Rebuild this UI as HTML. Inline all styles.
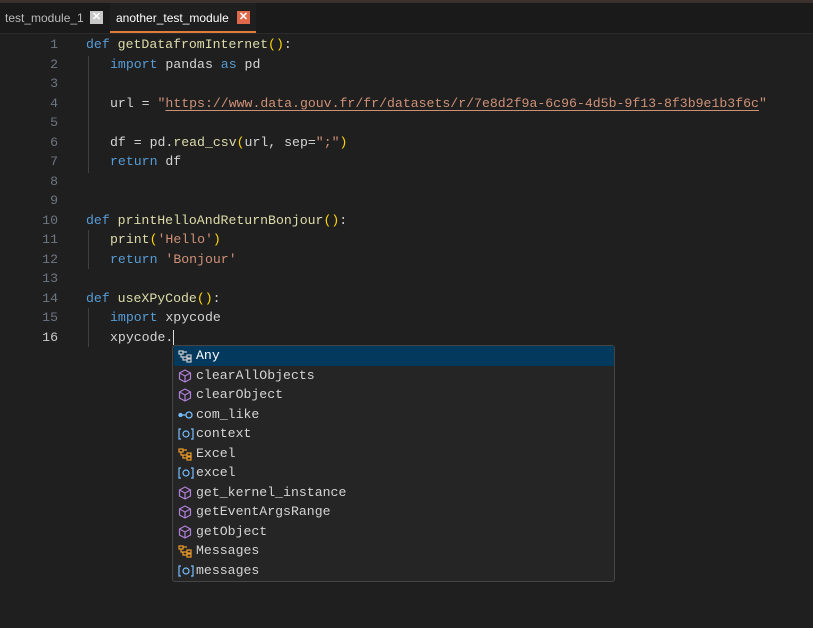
<!DOCTYPE html>
<html><head><style>
body{margin:0;width:813px;height:628px;background:#1f1f1f;overflow:hidden;position:relative;font-family:"Liberation Mono",monospace;font-size:13.2px;color:#d4d4d4}
.top{position:absolute;left:0;top:0;width:813px;height:3px;background:#3b302b}
.tabs{position:absolute;left:0;top:3px;width:813px;height:30px;background:#1a1a1a;border-bottom:1px solid #2b2b2b}
.tab{position:absolute;top:0;height:30px;font-family:"Liberation Sans",sans-serif;font-size:12px;line-height:31px}
.x{position:absolute;top:8px;width:13px;height:13px;font-size:11px;line-height:13px;text-align:center;color:#fff;font-weight:bold;font-family:"Liberation Sans",sans-serif}
.ln{position:absolute;width:58px;text-align:right;color:#6e7681}
.c{position:absolute;white-space:pre}
.k{color:#569cd6}.f{color:#dcdcaa}.s{color:#ce9178}.y{color:#ffd700}
.guide{position:absolute;left:88px;width:1px;background:#404040}
.sug{position:absolute;left:172px;top:345px;width:441px;height:235px;background:#252526;border:1px solid #454545;border-radius:3px}
.row{position:absolute;left:1px;width:440px;height:19.5px;line-height:19.5px}
.row span{position:absolute;left:22px}
.row svg{position:absolute;left:4px;top:3px}
.code{position:absolute;left:0;top:2px;width:813px;height:400px}
</style></head><body>
<div class="top"></div>
<div class="tabs">
 <div class="tab" style="left:0;width:108px;color:#bbb;"><span style="position:absolute;left:5px">test_module_1</span><div class="x" style="left:90px;background:#c8c8c8;color:#fff">✕</div></div>
 <div class="tab" style="left:110px;width:146px;background:#1f1f1f;color:#fff;border-bottom:2px solid #e07b3a;height:28px"><span style="position:absolute;left:6px;line-height:30px">another_test_module</span><div class="x" style="left:127px;top:8px;background:#e0684b">✕</div></div>
</div>
<div class="code">
<div class="guide" style="top:54px;height:117px"></div>
<div class="guide" style="top:228px;height:39px"></div>
<div class="guide" style="top:306px;height:39px"></div>

<div class="ln" style="top:35px">1</div><div class="c" style="left:86px;top:35px"><span class="k">def</span> <span class="f">getDatafromInternet</span><span class="y">()</span>:</div>
<div class="ln" style="top:54.5px">2</div><div class="c" style="left:110px;top:54.5px"><span class="k">import</span> pandas <span class="k">as</span> pd</div>
<div class="ln" style="top:74px">3</div>
<div class="ln" style="top:93.5px">4</div><div class="c" style="left:110px;top:93.5px">url = <span class="s">"<span style="text-decoration:underline;text-underline-offset:3px">https://www.data.gouv.fr/fr/datasets/r/7e8d2f9a-6c96-4d5b-9f13-8f3b9e1b3f6c</span>"</span></div>
<div class="ln" style="top:113px">5</div>
<div class="ln" style="top:132.5px">6</div><div class="c" style="left:110px;top:132.5px">df = pd.<span class="f">read_csv</span><span class="y">(</span>url, sep=<span class="s">";"</span><span class="y">)</span></div>
<div class="ln" style="top:152px">7</div><div class="c" style="left:110px;top:152px"><span class="k">return</span> df</div>
<div class="ln" style="top:171.5px">8</div>
<div class="ln" style="top:191px">9</div>
<div class="ln" style="top:210.5px">10</div><div class="c" style="left:86px;top:210.5px"><span class="k">def</span> <span class="f">printHelloAndReturnBonjour</span><span class="y">()</span>:</div>
<div class="ln" style="top:230px">11</div><div class="c" style="left:110px;top:230px"><span class="f">print</span><span class="y">(</span><span class="s">'Hello'</span><span class="y">)</span></div>
<div class="ln" style="top:249.5px">12</div><div class="c" style="left:110px;top:249.5px"><span class="k">return</span> <span class="s">'Bonjour'</span></div>
<div class="ln" style="top:269px">13</div>
<div class="ln" style="top:288.5px">14</div><div class="c" style="left:86px;top:288.5px"><span class="k">def</span> <span class="f">useXPyCode</span><span class="y">()</span>:</div>
<div class="ln" style="top:308px">15</div><div class="c" style="left:110px;top:308px"><span class="k">import</span> xpycode</div>
<div class="ln" style="top:327.5px;color:#ccc">16</div><div class="c" style="left:110px;top:327.5px">xpycode.<span style="border-left:1px solid #ddd"></span></div>
</div>

<div class="sug">
 <div class="row" style="top:0;background:#04395e;color:#fff"><svg width="14" height="14" viewBox="0 0 14 14" fill="none" stroke="#ccc" stroke-width="1.2"><rect x="1" y="2" width="4" height="3"/><rect x="9" y="6" width="4" height="3"/><rect x="9" y="10" width="4" height="3"/><path d="M3 5v3h6M5 8v3h4M5 3h4"/></svg><span>Any</span></div>
 <div class="row" style="top:19.5px"><svg width="14" height="14" viewBox="0 0 14 14" fill="none" stroke="#b180d7" stroke-width="1.2"><path d="M7 1l5.5 3v6L7 13 1.5 10V4z M1.5 4L7 7l5.5-3M7 7v6"/></svg><span>clearAllObjects</span></div>
 <div class="row" style="top:39px"><svg width="14" height="14" viewBox="0 0 14 14" fill="none" stroke="#b180d7" stroke-width="1.2"><path d="M7 1l5.5 3v6L7 13 1.5 10V4z M1.5 4L7 7l5.5-3M7 7v6"/></svg><span>clearObject</span></div>
 <div class="row" style="top:58.5px"><svg width="16" height="14" viewBox="0 0 16 14" fill="none" stroke="#75beff" stroke-width="1.3"><circle cx="2.5" cy="7" r="1.5" fill="#75beff"/><path d="M4 7h4"/><circle cx="11" cy="7" r="3"/></svg><span>com_like</span></div>
 <div class="row" style="top:78px"><svg width="16" height="14" viewBox="0 0 16 14" fill="none" stroke="#75beff" stroke-width="1.2"><path d="M3 2H1v10h2M13 2h2v10h-2"/><circle cx="8" cy="7" r="3"/></svg><span>context</span></div>
 <div class="row" style="top:97.5px"><svg width="14" height="14" viewBox="0 0 14 14" fill="none" stroke="#ee9d28" stroke-width="1.2"><rect x="1" y="2" width="4" height="3"/><rect x="9" y="6" width="4" height="3"/><rect x="9" y="10" width="4" height="3"/><path d="M3 5v3h6M5 8v3h4M5 3h4"/></svg><span>Excel</span></div>
 <div class="row" style="top:117px"><svg width="16" height="14" viewBox="0 0 16 14" fill="none" stroke="#75beff" stroke-width="1.2"><path d="M3 2H1v10h2M13 2h2v10h-2"/><circle cx="8" cy="7" r="3"/></svg><span>excel</span></div>
 <div class="row" style="top:136.5px"><svg width="14" height="14" viewBox="0 0 14 14" fill="none" stroke="#b180d7" stroke-width="1.2"><path d="M7 1l5.5 3v6L7 13 1.5 10V4z M1.5 4L7 7l5.5-3M7 7v6"/></svg><span>get_kernel_instance</span></div>
 <div class="row" style="top:156px"><svg width="14" height="14" viewBox="0 0 14 14" fill="none" stroke="#b180d7" stroke-width="1.2"><path d="M7 1l5.5 3v6L7 13 1.5 10V4z M1.5 4L7 7l5.5-3M7 7v6"/></svg><span>getEventArgsRange</span></div>
 <div class="row" style="top:175.5px"><svg width="14" height="14" viewBox="0 0 14 14" fill="none" stroke="#b180d7" stroke-width="1.2"><path d="M7 1l5.5 3v6L7 13 1.5 10V4z M1.5 4L7 7l5.5-3M7 7v6"/></svg><span>getObject</span></div>
 <div class="row" style="top:195px"><svg width="14" height="14" viewBox="0 0 14 14" fill="none" stroke="#ee9d28" stroke-width="1.2"><rect x="1" y="2" width="4" height="3"/><rect x="9" y="6" width="4" height="3"/><rect x="9" y="10" width="4" height="3"/><path d="M3 5v3h6M5 8v3h4M5 3h4"/></svg><span>Messages</span></div>
 <div class="row" style="top:214.5px"><svg width="16" height="14" viewBox="0 0 16 14" fill="none" stroke="#75beff" stroke-width="1.2"><path d="M3 2H1v10h2M13 2h2v10h-2"/><circle cx="8" cy="7" r="3"/></svg><span>messages</span></div>
</div>
</body></html>
